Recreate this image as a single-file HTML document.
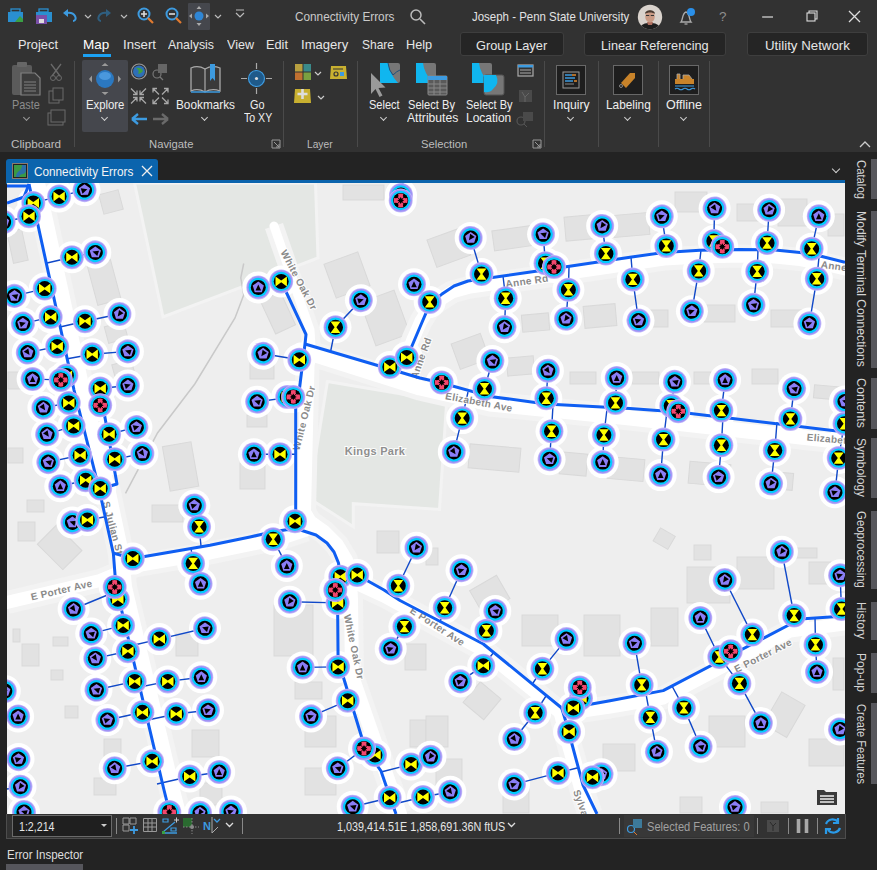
<!DOCTYPE html>
<html><head><meta charset="utf-8">
<style>
*{box-sizing:border-box}
html,body{margin:0;padding:0}
body{width:877px;height:870px;overflow:hidden;position:relative;background:#232323;font-family:"Liberation Sans",sans-serif;color:#e8e8e8}
.a{position:absolute}
.t{position:absolute;white-space:nowrap;line-height:1}
.menu{font-size:13.5px;color:#e6e6e6;top:39px}
.rl{font-size:12.5px;color:#e6e6e6;text-align:center}
.gl{font-size:12px;color:#b9b9b9;top:138px}
.sep{position:absolute;width:1px;background:#4a4a4a}
.chev{position:absolute;width:5px;height:5px;border-right:1.3px solid #cfcfcf;border-bottom:1.3px solid #cfcfcf;transform:rotate(45deg)}
.btn{position:absolute;top:32px;height:24px;background:#252525;border:1px solid #3e3e3e;border-radius:3px;font-size:13.5px;color:#e6e6e6;text-align:center;line-height:23px}
.rt{position:absolute;left:845px;width:32px}
.rt .bar{position:absolute;left:26px;width:6px;top:0;bottom:0;background:#57575c}
.rt .tx{position:absolute;left:9px;top:0;transform-origin:0 0;transform:translate(17px,0) rotate(90deg);font-size:13px;color:#d2d2d2;white-space:nowrap;line-height:16px}
</style></head>
<body>
<!-- top area -->
<div class="a" style="left:0;top:0;width:877px;height:152px;background:#323232"></div>

<!-- quick access icons -->
<svg class="a" style="left:0;top:0" width="260" height="34">
 <g>
  <rect x="8" y="12" width="15" height="10" fill="#2a8fd0"/><rect x="11" y="9" width="9" height="3" fill="none" stroke="#2a8fd0" stroke-width="1.3"/>
  <path d="M15,22 L20,16 L23,19 L23,22Z" fill="#3aa045"/>
  <rect x="36" y="12" width="16" height="10" fill="#2a8fd0"/><rect x="39" y="9" width="9" height="3" fill="none" stroke="#2a8fd0" stroke-width="1.3"/>
  <rect x="36" y="15" width="11" height="9" fill="#7a4fa8"/><rect x="39" y="19" width="5" height="4" fill="#ddd"/>
  <path d="M73,21 C78,21 76,11 66,13" fill="none" stroke="#3d9be0" stroke-width="2"/><path d="M63,13 L68,9 L68,17Z" fill="#3d9be0"/>
  <path d="M85,15 l3,3 l3,-3" fill="none" stroke="#bbb" stroke-width="1.2"/>
  <path d="M101,21 C96,21 98,11 108,13" fill="none" stroke="#2f5f80" stroke-width="2"/><path d="M111,13 L106,9 L106,17Z" fill="#2f5f80"/>
  <path d="M121,15 l3,3 l3,-3" fill="none" stroke="#bbb" stroke-width="1.2"/>
  <circle cx="144" cy="14" r="5.5" fill="none" stroke="#3d9be0" stroke-width="2"/><path d="M141,14h6M144,11v6" stroke="#ddd" stroke-width="1.6"/><path d="M148,18 l5,5" stroke="#e07a30" stroke-width="2.2"/>
  <circle cx="172" cy="14" r="5.5" fill="none" stroke="#3d9be0" stroke-width="2"/><path d="M169,14h6" stroke="#ddd" stroke-width="1.6"/><path d="M176,18 l5,5" stroke="#e07a30" stroke-width="2.2"/>
  <rect x="188" y="3" width="22" height="27" fill="#45474d" rx="1"/>
  <circle cx="199" cy="16" r="4.5" fill="#2f86d6"/><path d="M199,6l-2.5,3h5zM199,26l-2.5,-3h5zM189,16l3,-2.5v5zM209,16l-3,-2.5v5z" fill="#aaa"/>
  <path d="M215,15 l3,3 l3,-3" fill="none" stroke="#bbb" stroke-width="1.2"/>
  <path d="M236,13 l4,4 l4,-4 M236,10h8" fill="none" stroke="#bbb" stroke-width="1.2"/>
 </g>
</svg>
<svg class="a" style="left:408px;top:7px" width="20" height="20"><circle cx="8" cy="8" r="5" fill="none" stroke="#bbb" stroke-width="1.5"/><path d="M12,12l5,5" stroke="#bbb" stroke-width="1.6"/></svg>
<svg class="a" style="left:636px;top:3px" width="28" height="28"><defs><clipPath id="av"><circle cx="14" cy="14" r="12.2"/></clipPath></defs><g clip-path="url(#av)"><rect width="28" height="28" fill="#d9d2cc"/><path d="M3,28 C4,21 9,20 14,20 C19,20 24,21 25,28Z" fill="#1e1e1e"/><path d="M11,19h6l-1,3h-4z" fill="#b07060"/><ellipse cx="14" cy="13.5" rx="4.8" ry="6" fill="#c99a84"/><path d="M9,11 C9,6 19,6 19,11 C17,9 11,9 9,11Z" fill="#4a3a30"/><path d="M10,12.5h3.2M14.8,12.5h3.2" stroke="#333" stroke-width="1.1"/></g></svg>
<svg class="a" style="left:674px;top:4px" width="26" height="26"><path d="M7,18 C9,16 8,9 12,8 C16,9 15,16 17,18Z" fill="none" stroke="#aaa" stroke-width="1.3"/><path d="M10.5,20h3" stroke="#aaa" stroke-width="1.3"/><circle cx="17" cy="8" r="4" fill="#2a8fe8"/></svg>
<svg class="a" style="left:755px;top:6px" width="122" height="22"><path d="M7,11h11" stroke="#ddd" stroke-width="1.2"/><rect x="52" y="7" width="8" height="8" fill="none" stroke="#ddd" stroke-width="1.1"/><path d="M54,7v-2h8v8h-2" fill="none" stroke="#ddd" stroke-width="1.1"/><path d="M94,5l11,11M105,5l-11,11" stroke="#ddd" stroke-width="1.3"/></svg>

<!-- menu -->
<div class="a" style="left:83px;top:54px;width:28px;height:3px;background:#1ba1f2"></div>
<div class="btn" style="left:460px;width:104px"></div>
<div class="btn" style="left:584px;width:142px"></div>
<div class="btn" style="left:747px;width:121px"></div>

<!-- ribbon -->
<svg class="a" style="left:0;top:55px" width="877" height="97">
 <!-- clipboard -->
 <rect x="12" y="10" width="20" height="30" rx="2" fill="#5b5b5b"/><rect x="17" y="7" width="10" height="5" rx="1" fill="#666"/>
 <path d="M21,18h14l5,5v17h-19z" fill="#3c3c3c" stroke="#808080" stroke-width="1.2"/><path d="M24,27h12M24,30h12M24,33h12M24,36h12" stroke="#808080" stroke-width="1"/>
 <path d="M51,9 l9,12 M61,9 l-9,12" stroke="#6a6a6a" stroke-width="1.3"/><circle cx="53" cy="23" r="2.5" fill="none" stroke="#6a6a6a"/><circle cx="59" cy="23" r="2.5" fill="none" stroke="#6a6a6a"/>
 <rect x="49" y="36" width="10" height="12" fill="none" stroke="#6a6a6a"/><rect x="53" y="33" width="10" height="12" fill="#323232" stroke="#6a6a6a"/>
 <rect x="48" y="58" width="15" height="12" fill="none" stroke="#6a6a6a"/><rect x="51" y="55" width="14" height="12" fill="#323232" stroke="#6a6a6a"/>
 <!-- explore -->
 <rect x="82" y="5" width="46" height="72" rx="2" fill="#45474d"/>
 <ellipse cx="105" cy="24" rx="9" ry="9" fill="#2b78c0"/><ellipse cx="105" cy="21" rx="6" ry="4" fill="#4a98dd"/>
 <path d="M105,8l-3.5,3h7zM105,40l-3.5,-3h7zM89,24l3,-3.5v7zM121,24l-3,-3.5v7z" fill="#9a9a9a"/>
 <circle cx="139" cy="16.5" r="7.5" fill="none" stroke="#999" stroke-width="1.2"/><circle cx="139" cy="16.5" r="6" fill="#2f6fb8"/><path d="M136,13 q4,2 2,6 q3,0 5,-3 q-2,-4 -7,-3z" fill="#3fa040"/>
 <circle cx="157" cy="19" r="4" fill="none" stroke="#777" stroke-width="1.2"/><path d="M160,22l3,3" stroke="#777" stroke-width="1.2"/><rect x="158" y="9" width="9" height="9" fill="#666"/>
 <path d="M131,33.5L137,39.5M133,39.5H137V35.5 M146,33.5L140,39.5M144,39.5H140V35.5 M131,48.5L137,42.5M133,42.5H137V46.5 M146,48.5L140,42.5M144,42.5H140V46.5" fill="none" stroke="#a8a8a8" stroke-width="1.3"/>
 <path d="M159,39.5L153,33.5M157,33.5H153V37.5 M162,39.5L168,33.5M164,33.5H168V37.5 M159,42.5L153,48.5M157,48.5H153V44.5 M162,42.5L168,48.5M164,48.5H168V44.5" fill="none" stroke="#a8a8a8" stroke-width="1.3"/>
 <path d="M132,64h15M132,64l6,-5M132,64l6,5" fill="none" stroke="#3d9be0" stroke-width="2.3"/>
 <path d="M168,64h-15M168,64l-6,-5M168,64l-6,5" fill="none" stroke="#6a6a6a" stroke-width="2.3"/>
 <!-- bookmarks -->
 <path d="M191,13 Q198,10 205,14 Q212,10 220,13 V36 Q212,33 205,37 Q198,33 191,36Z" fill="#3a3a3a" stroke="#aaa" stroke-width="1.3"/><path d="M205,14V37" stroke="#aaa" stroke-width="1.2"/>
 <path d="M191,37h29" stroke="#3d9be0" stroke-width="1.5"/><path d="M210,9h5v17l-2.5,-3l-2.5,3z" fill="#3d9be0"/>
 <!-- go to xy -->
 <circle cx="256.5" cy="23.5" r="8" fill="#1f5a8a" stroke="#3d9be0" stroke-width="1.2"/><circle cx="256.5" cy="23.5" r="1.6" fill="#ddd"/>
 <path d="M241,23.5h6M266,23.5h6M256.5,8v6M256.5,33v6" stroke="#aaa" stroke-width="1.2"/>
 <!-- layer -->
 <rect x="295" y="9" width="7.5" height="7.5" fill="#b8a040"/><rect x="303.5" y="9" width="7.5" height="7.5" fill="#3a8a8a"/><rect x="295" y="17.5" width="7.5" height="7.5" fill="#c07030"/><rect x="303.5" y="17.5" width="7.5" height="7.5" fill="#7aa040"/>
 <path d="M315,17 l3,3 l3,-3" fill="none" stroke="#ccc" stroke-width="1.2"/>
 <path d="M331,11 h15 l1,13 h-17z" fill="#c8b030"/><circle cx="336" cy="19" r="2" fill="none" stroke="#333" stroke-width="1.2"/><rect x="340" y="17" width="4" height="4" fill="#3d9be0"/><path d="M333,14h10" stroke="#333"/>
 <path d="M295,34 h15 l1,14 h-17z" fill="#c8b030"/><path d="M302.5,34v10M297.5,39h10" stroke="#ddd" stroke-width="2.6"/>
 <path d="M318,41 l3,3 l3,-3" fill="none" stroke="#ccc" stroke-width="1.2"/>
 <!-- select -->
 <rect x="380" y="8" width="20" height="20" rx="2" fill="#777"/><path d="M380,8h8q1,10 10,20h-18z" fill="#10b6ef"/><path d="M388,8q1,8 5,12q4,-4 7,-5" fill="none" stroke="#1f4f7a" stroke-width="1"/>
 <path d="M371,18 l0,21 l4.5,-5 l4,8 l3,-1.5 l-4,-7.5 l7,-0.5z" fill="#9a9a9a"/>
 <!-- select by attributes -->
 <rect x="416" y="8" width="20" height="20" rx="2" fill="#777"/><path d="M416,8h7q1,10 10,20h-17z" fill="#10b6ef"/>
 <rect x="428" y="21" width="19" height="19" rx="1" fill="#5a5a5a" stroke="#888" stroke-width="1"/><rect x="428" y="21" width="19" height="4" fill="#3d9be0"/><path d="M428,29h19M428,33h19M428,37h19M434,25v15M440,25v15" stroke="#888" stroke-width="1"/>
 <!-- select by location -->
 <rect x="472" y="8" width="20" height="20" rx="2" fill="#777"/><path d="M472,8h7q1,10 10,20h-17z" fill="#10b6ef"/>
 <rect x="484" y="20" width="20" height="20" rx="2" fill="#777" stroke="#555"/><path d="M484,20h12q4,8 -3,14q-3,4 -9,3z" fill="#10b6ef"/>
 <rect x="518" y="10" width="15" height="11" fill="none" stroke="#aaa" stroke-width="1.2"/><rect x="518" y="10" width="15" height="2.5" fill="#3d9be0"/><path d="M520,15h11M520,18h11" stroke="#aaa"/>
 <rect x="519" y="35" width="13" height="12" fill="#4a4a4a"/><path d="M522,37l3,5l4,-4M525,42v5" stroke="#666" fill="none"/>
 <circle cx="521" cy="66" r="4" fill="none" stroke="#555" stroke-width="1.2"/><path d="M524,69l3,3" stroke="#555"/><rect x="523" y="57" width="10" height="9" fill="#4a4a4a"/>
 <!-- inquiry / labeling / offline boxes -->
 <rect x="556.5" y="10.5" width="29" height="29" fill="#1e1e1e" stroke="#686868"/><rect x="563" y="17" width="16" height="16" fill="none" stroke="#999"/><path d="M565,20h7M565,23h10M565,26h8" stroke="#3d9be0" stroke-width="1.6"/><path d="M572,20h4M574,26h3" stroke="#e08a30" stroke-width="1.6"/><path d="M565,29h9" stroke="#888"/>
 <rect x="613.5" y="10.5" width="29" height="29" fill="#1e1e1e" stroke="#686868"/><path d="M621,28 l9,-10 l5,0 l0,5 l-9,10z" fill="#c8832a"/><circle cx="621" cy="31" r="1.5" fill="none" stroke="#888"/>
 <rect x="669.5" y="10.5" width="29" height="29" fill="#1e1e1e" stroke="#686868"/><path d="M675,24h19v5h-19z" fill="#c8832a"/><path d="M677,24v-5h3v5M683,24v-4h6l3,4" fill="#c8832a" stroke="#aaa" stroke-width=".8"/><path d="M675,31h19M675,34q2,-1.5 4,0t4,0t4,0t4,0t4,0" stroke="#3d9be0" stroke-width="1.2" fill="none"/>
 <!-- launchers -->
 <path d="M272,85h8v8h-8zM274,87l5,5M279,89v3h-3" fill="none" stroke="#999" stroke-width="1"/>
 <path d="M533,85h8v8h-8zM535,87l5,5M540,89v3h-3" fill="none" stroke="#999" stroke-width="1"/>
 <path d="M860,92 l5,-5 l5,5" fill="none" stroke="#ccc" stroke-width="1.3"/>
</svg>
<div class="chev" style="left:24px;top:115px;border-color:#9a9a9a"></div>
<div class="chev" style="left:102px;top:115px"></div>
<div class="chev" style="left:202px;top:115px"></div>
<div class="chev" style="left:381px;top:115px"></div>
<div class="chev" style="left:568px;top:115px"></div>
<div class="chev" style="left:625px;top:115px"></div>
<div class="chev" style="left:681px;top:115px"></div>
<div class="sep" style="left:74px;top:61px;height:86px"></div>
<div class="sep" style="left:283px;top:61px;height:86px"></div>
<div class="sep" style="left:357px;top:61px;height:86px"></div>
<div class="sep" style="left:544px;top:61px;height:86px"></div>
<div class="sep" style="left:598px;top:61px;height:86px"></div>
<div class="sep" style="left:658px;top:61px;height:86px"></div>
<div class="sep" style="left:709px;top:61px;height:86px"></div>

<!-- view tab -->
<div class="a" style="left:6px;top:159px;width:152px;height:25px;background:#0b64ad;border-radius:3px 3px 0 0"></div>
<svg class="a" style="left:12px;top:163px" width="16" height="16"><rect x=".5" y=".5" width="15" height="15" fill="#222" stroke="#8a7a70"/><rect x="2" y="2" width="12" height="12" fill="#3a9a45"/><path d="M14,2 L10,2 q0,4 -3,6 q-3,2 -3,6 h3 q1,-3 4,-3 q3,-1 3,-4z" fill="#2a70a8"/></svg>
<svg class="a" style="left:140px;top:164px" width="14" height="14"><path d="M2,2l10,10M12,2l-10,10" stroke="#eee" stroke-width="1.3"/></svg>
<div class="a" style="left:7px;top:180px;width:838px;height:3px;background:#0b64ad"></div>
<div class="chev" style="left:833px;top:166px;width:6px;height:6px"></div>

<svg width="877" height="870" viewBox="0 0 877 870" style="position:absolute;left:0;top:0">
<defs>
<clipPath id="mc"><rect x="7" y="183" width="838" height="631"/></clipPath>
<g id="ring"><circle r="12" fill="#c2b9fa"/><circle r="11.2" fill="#a092f6"/><circle r="9.7" fill="#00ccff"/><circle r="7.5" fill="#000"/></g>
<g id="T"><use href="#ring"/><path d="M-5,-5.7L5,-5.7L0.9,0L5,5.7L-5,5.7L-0.9,0Z" fill="#ffff00"/></g>
<g id="S"><use href="#ring"/><path d="M0,-5.9L5.6,-1.8L3.5,4.8L-3.5,4.8L-5.6,-1.8Z" fill="#8a7ef6"/><path d="M-2.8,3L2.8,3L0,-3Z" fill="#000"/></g>
<clipPath id="ec"><circle r="7.4"/></clipPath><g id="E"><use href="#ring"/><circle r="6.9" fill="#f2476e"/><g fill="#000" clip-path="url(#ec)"><circle cx="5" cy="-5" r="2.7"/><circle cx="5" cy="5" r="2.7"/><circle cx="-5" cy="5" r="2.7"/><circle cx="-5" cy="-5" r="2.7"/><path d="M-6,-6L6,6M6,-6L-6,6" stroke="#000" stroke-width="0.9"/></g><path d="M0,-3.4L1.2,-1.2L3.4,0L1.2,1.2L0,3.4L-1.2,1.2L-3.4,0L-1.2,-1.2Z" fill="#000"/><circle r="1.9" fill="#000"/></g>
</defs>
<g clip-path="url(#mc)">
<rect x="7" y="183" width="838" height="631" fill="#eeeeee"/>
<polygon points="134.5,183.0 315.5,183.0 318.0,258.0 163.0,317.0" fill="#e4e7e4" stroke="#f3f3f3" stroke-width="3"/>
<polygon points="327.4,381.5 446.7,401.6 439.5,509.4 353.3,503.7 353.3,526.7 308.7,498.0" fill="#e4e7e4" stroke="#f3f3f3" stroke-width="3"/>
<g id="bld" fill="#e2e2e2" stroke="#d9d9d9" stroke-width="1"><rect x="101" y="192" width="20" height="20" transform="rotate(-15 111 202)"/>
<rect x="10" y="230" width="15" height="32" transform="rotate(-12 18 246)"/>
<rect x="92" y="262" width="24" height="41" transform="rotate(-15 104 282)"/>
<rect x="106" y="324" width="20" height="17" transform="rotate(-15 116 332)"/>
<rect x="113" y="362" width="20" height="12" transform="rotate(-15 123 368)"/>
<rect x="166" y="444" width="29" height="45" transform="rotate(-10 180 466)"/>
<rect x="267" y="295" width="22" height="36" transform="rotate(-25 278 313)"/>
<rect x="329" y="257" width="36" height="36" transform="rotate(-20 347 275)"/>
<rect x="367" y="295" width="36" height="46" transform="rotate(-20 385 318)"/>
<rect x="343" y="185" width="41" height="15" transform="rotate(0 364 192)"/>
<rect x="250" y="362" width="24" height="17" transform="rotate(0 262 370)"/>
<rect x="247" y="415" width="20" height="12" transform="rotate(0 257 421)"/>
<rect x="240" y="463" width="25" height="26" transform="rotate(0 252 476)"/>
<rect x="8" y="372" width="17" height="17" transform="rotate(0 16 380)"/>
<rect x="8" y="448" width="15" height="15" transform="rotate(0 16 456)"/>
<rect x="431" y="233" width="36" height="29" transform="rotate(-20 449 248)"/>
<rect x="493" y="228" width="41" height="20" transform="rotate(-8 514 238)"/>
<rect x="565" y="216" width="27" height="24" transform="rotate(-5 578 228)"/>
<rect x="613" y="214" width="36" height="22" transform="rotate(-5 631 225)"/>
<rect x="675" y="192" width="32" height="20" transform="rotate(0 691 202)"/>
<rect x="737" y="204" width="22" height="17" transform="rotate(0 748 212)"/>
<rect x="778" y="199" width="29" height="27" transform="rotate(0 792 212)"/>
<rect x="828" y="214" width="16" height="22" transform="rotate(0 836 225)"/>
<rect x="522" y="314" width="27" height="17" transform="rotate(-5 536 322)"/>
<rect x="584" y="305" width="32" height="22" transform="rotate(-5 600 316)"/>
<rect x="646" y="310" width="22" height="17" transform="rotate(0 657 318)"/>
<rect x="704" y="305" width="31" height="17" transform="rotate(0 720 314)"/>
<rect x="771" y="310" width="31" height="17" transform="rotate(0 786 318)"/>
<rect x="455" y="338" width="31" height="27" transform="rotate(-20 470 352)"/>
<rect x="507" y="357" width="27" height="18" transform="rotate(-5 520 366)"/>
<rect x="570" y="372" width="26" height="12" transform="rotate(0 583 378)"/>
<rect x="632" y="372" width="27" height="12" transform="rotate(0 646 378)"/>
<rect x="694" y="372" width="17" height="12" transform="rotate(0 702 378)"/>
<rect x="752" y="369" width="26" height="15" transform="rotate(0 765 376)"/>
<rect x="814" y="386" width="27" height="13" transform="rotate(5 828 392)"/>
<rect x="469" y="446" width="51" height="24" transform="rotate(5 494 458)"/>
<rect x="560" y="453" width="27" height="22" transform="rotate(5 574 464)"/>
<rect x="608" y="458" width="36" height="22" transform="rotate(5 626 469)"/>
<rect x="689" y="463" width="41" height="22" transform="rotate(5 710 474)"/>
<rect x="761" y="472" width="32" height="17" transform="rotate(5 777 480)"/>
<rect x="27" y="500" width="17" height="12" transform="rotate(0 36 506)"/>
<rect x="18" y="522" width="17" height="19" transform="rotate(0 26 532)"/>
<rect x="46" y="529" width="27" height="36" transform="rotate(-45 60 547)"/>
<rect x="152" y="505" width="31" height="17" transform="rotate(0 168 514)"/>
<rect x="13" y="629" width="7" height="13" transform="rotate(0 16 636)"/>
<rect x="22" y="644" width="17" height="22" transform="rotate(0 30 655)"/>
<rect x="53" y="637" width="15" height="9" transform="rotate(0 60 642)"/>
<rect x="51" y="670" width="12" height="10" transform="rotate(0 57 675)"/>
<rect x="65" y="706" width="13" height="12" transform="rotate(0 72 712)"/>
<rect x="104" y="739" width="17" height="20" transform="rotate(0 112 749)"/>
<rect x="94" y="778" width="22" height="17" transform="rotate(0 105 786)"/>
<rect x="176" y="634" width="22" height="22" transform="rotate(0 187 645)"/>
<rect x="192" y="730" width="27" height="27" transform="rotate(0 206 744)"/>
<rect x="200" y="783" width="22" height="22" transform="rotate(0 211 794)"/>
<rect x="274" y="605" width="39" height="51" transform="rotate(0 294 630)"/>
<rect x="295" y="682" width="27" height="17" transform="rotate(0 308 690)"/>
<rect x="305" y="716" width="31" height="31" transform="rotate(0 320 732)"/>
<rect x="305" y="768" width="31" height="27" transform="rotate(0 320 782)"/>
<rect x="377" y="531" width="22" height="22" transform="rotate(0 388 542)"/>
<rect x="405" y="644" width="21" height="26" transform="rotate(0 416 657)"/>
<rect x="410" y="720" width="16" height="27" transform="rotate(0 418 734)"/>
<rect x="656" y="531" width="17" height="15" transform="rotate(30 664 538)"/>
<rect x="694" y="545" width="17" height="15" transform="rotate(0 702 552)"/>
<rect x="474" y="581" width="31" height="27" transform="rotate(-30 490 594)"/>
<rect x="426" y="548" width="12" height="17" transform="rotate(0 432 556)"/>
<rect x="522" y="615" width="36" height="31" transform="rotate(0 540 630)"/>
<rect x="584" y="615" width="36" height="41" transform="rotate(0 602 636)"/>
<rect x="651" y="608" width="27" height="38" transform="rotate(0 664 627)"/>
<rect x="687" y="567" width="43" height="36" transform="rotate(0 708 585)"/>
<rect x="737" y="557" width="37" height="32" transform="rotate(0 756 573)"/>
<rect x="795" y="548" width="22" height="10" transform="rotate(0 806 553)"/>
<rect x="809" y="562" width="22" height="22" transform="rotate(0 820 573)"/>
<rect x="833" y="658" width="11" height="32" transform="rotate(0 838 674)"/>
<rect x="771" y="696" width="27" height="37" transform="rotate(30 784 714)"/>
<rect x="709" y="716" width="36" height="31" transform="rotate(0 727 732)"/>
<rect x="603" y="744" width="32" height="27" transform="rotate(0 619 758)"/>
<rect x="469" y="687" width="27" height="27" transform="rotate(40 482 700)"/>
<rect x="426" y="716" width="22" height="31" transform="rotate(0 437 732)"/>
<rect x="436" y="759" width="26" height="26" transform="rotate(0 449 772)"/>
<rect x="503" y="787" width="26" height="26" transform="rotate(0 516 800)"/>
<rect x="680" y="797" width="22" height="16" transform="rotate(0 691 805)"/>
<rect x="761" y="802" width="27" height="11" transform="rotate(0 774 808)"/>
<rect x="809" y="739" width="35" height="27" transform="rotate(0 826 752)"/></g>
<polyline points="125.5,493.4 157.5,433.0 194.8,384.0 235.0,318.0 243.7,295.0 240.8,277.8 243.7,263.5" fill="none" stroke="#c9c9c9" stroke-width="1.5"/>
<polyline points="37.0,183.0 82.0,390.0 107.0,488.0 121.0,554.0 124.0,587.0 172.0,790.0 178.0,814.0" fill="none" stroke="#f3f3f3" stroke-width="26" stroke-linejoin="round"/>
<polyline points="274.0,226.0 310.0,330.0 311.0,346.0" fill="none" stroke="#f3f3f3" stroke-width="19" stroke-linejoin="round"/>
<polyline points="300.0,350.0 420.0,388.0 490.0,404.0 630.0,418.0 845.0,442.0" fill="none" stroke="#f3f3f3" stroke-width="25" stroke-linejoin="round"/>
<polyline points="400.0,372.0 414.0,337.0 421.0,321.0 428.0,310.0 438.0,301.0 452.0,292.0 470.0,287.0 541.0,277.0 630.0,264.0 664.0,259.0 700.0,257.0 740.0,256.0 775.0,257.0 800.0,259.5 822.0,263.5 845.0,269.0" fill="none" stroke="#f3f3f3" stroke-width="23" stroke-linejoin="round"/>
<polyline points="308.0,345.0 304.0,512.0 310.0,522.0 324.0,532.0 337.0,545.0 346.0,560.0 350.0,578.0 351.0,600.0 352.0,676.0 400.0,814.0" fill="none" stroke="#f3f3f3" stroke-width="24" stroke-linejoin="round"/>
<polyline points="7.0,602.5 100.0,580.5 135.0,566.0 210.0,553.0 282.0,538.0 306.0,530.0" fill="none" stroke="#f3f3f3" stroke-width="23" stroke-linejoin="round"/>
<polyline points="345.0,578.0 384.0,596.0 483.0,650.0 562.0,714.0 610.0,707.0 663.0,698.0 790.0,631.0 845.0,624.0" fill="none" stroke="#f3f3f3" stroke-width="23" stroke-linejoin="round"/>
<polyline points="561.0,712.0 568.0,740.0 582.0,790.0 590.0,814.0" fill="none" stroke="#f3f3f3" stroke-width="25" stroke-linejoin="round"/>
<polyline points="37.0,183.0 82.0,390.0 107.0,488.0 121.0,554.0 124.0,587.0 172.0,790.0 178.0,814.0" fill="none" stroke="#ffffff" stroke-width="16" stroke-linejoin="round" stroke-linecap="round"/>
<polyline points="274.0,226.0 310.0,330.0 311.0,346.0" fill="none" stroke="#ffffff" stroke-width="9" stroke-linejoin="round" stroke-linecap="round"/>
<polyline points="300.0,350.0 420.0,388.0 490.0,404.0 630.0,418.0 845.0,442.0" fill="none" stroke="#ffffff" stroke-width="15" stroke-linejoin="round" stroke-linecap="round"/>
<polyline points="400.0,372.0 414.0,337.0 421.0,321.0 428.0,310.0 438.0,301.0 452.0,292.0 470.0,287.0 541.0,277.0 630.0,264.0 664.0,259.0 700.0,257.0 740.0,256.0 775.0,257.0 800.0,259.5 822.0,263.5 845.0,269.0" fill="none" stroke="#ffffff" stroke-width="13" stroke-linejoin="round" stroke-linecap="round"/>
<polyline points="308.0,345.0 304.0,512.0 310.0,522.0 324.0,532.0 337.0,545.0 346.0,560.0 350.0,578.0 351.0,600.0 352.0,676.0 400.0,814.0" fill="none" stroke="#ffffff" stroke-width="14" stroke-linejoin="round" stroke-linecap="round"/>
<polyline points="7.0,602.5 100.0,580.5 135.0,566.0 210.0,553.0 282.0,538.0 306.0,530.0" fill="none" stroke="#ffffff" stroke-width="13" stroke-linejoin="round" stroke-linecap="round"/>
<polyline points="345.0,578.0 384.0,596.0 483.0,650.0 562.0,714.0 610.0,707.0 663.0,698.0 790.0,631.0 845.0,624.0" fill="none" stroke="#ffffff" stroke-width="13" stroke-linejoin="round" stroke-linecap="round"/>
<polyline points="561.0,712.0 568.0,740.0 582.0,790.0 590.0,814.0" fill="none" stroke="#ffffff" stroke-width="15" stroke-linejoin="round" stroke-linecap="round"/>
<g fill="#fff">
<circle cx="59.1" cy="196.4" r="16"/>
<circle cx="84.5" cy="190.1" r="16"/>
<circle cx="33.3" cy="202.9" r="16"/>
<circle cx="29.0" cy="216.2" r="16"/>
<circle cx="3.6" cy="222.0" r="16"/>
<circle cx="71.9" cy="257.2" r="16"/>
<circle cx="95.3" cy="252.4" r="16"/>
<circle cx="44.7" cy="288.6" r="16"/>
<circle cx="14.5" cy="295.9" r="16"/>
<circle cx="50.7" cy="317.1" r="16"/>
<circle cx="22.9" cy="323.6" r="16"/>
<circle cx="85.0" cy="321.2" r="16"/>
<circle cx="119.5" cy="314.0" r="16"/>
<circle cx="57.2" cy="346.5" r="16"/>
<circle cx="27.8" cy="352.6" r="16"/>
<circle cx="92.2" cy="354.3" r="16"/>
<circle cx="127.9" cy="351.4" r="16"/>
<circle cx="66.4" cy="375.5" r="16"/>
<circle cx="60.8" cy="379.9" r="16"/>
<circle cx="32.6" cy="379.1" r="16"/>
<circle cx="100.2" cy="388.5" r="16"/>
<circle cx="127.9" cy="385.5" r="16"/>
<circle cx="401.0" cy="195.0" r="16"/>
<circle cx="400.7" cy="200.5" r="16"/>
<circle cx="258.3" cy="287.4" r="16"/>
<circle cx="281.2" cy="281.4" r="16"/>
<circle cx="360.9" cy="300.2" r="16"/>
<circle cx="335.5" cy="327.2" r="16"/>
<circle cx="263.1" cy="353.8" r="16"/>
<circle cx="299.3" cy="359.8" r="16"/>
<circle cx="389.8" cy="367.1" r="16"/>
<circle cx="406.7" cy="357.4" r="16"/>
<circle cx="414.0" cy="284.3" r="16"/>
<circle cx="470.7" cy="237.9" r="16"/>
<circle cx="481.5" cy="274.1" r="16"/>
<circle cx="429.7" cy="301.9" r="16"/>
<circle cx="543.1" cy="234.3" r="16"/>
<circle cx="545.5" cy="263.3" r="16"/>
<circle cx="554.0" cy="266.9" r="16"/>
<circle cx="505.7" cy="298.3" r="16"/>
<circle cx="504.5" cy="327.2" r="16"/>
<circle cx="568.4" cy="289.8" r="16"/>
<circle cx="566.0" cy="318.8" r="16"/>
<circle cx="602.2" cy="225.9" r="16"/>
<circle cx="605.9" cy="253.6" r="16"/>
<circle cx="632.8" cy="279.4" r="16"/>
<circle cx="638.5" cy="320.5" r="16"/>
<circle cx="441.7" cy="382.5" r="16"/>
<circle cx="492.4" cy="361.0" r="16"/>
<circle cx="484.5" cy="388.8" r="16"/>
<circle cx="547.9" cy="370.7" r="16"/>
<circle cx="616.7" cy="377.9" r="16"/>
<circle cx="661.8" cy="216.3" r="16"/>
<circle cx="666.3" cy="245.9" r="16"/>
<circle cx="714.6" cy="208.4" r="16"/>
<circle cx="713.8" cy="241.0" r="16"/>
<circle cx="722.3" cy="246.7" r="16"/>
<circle cx="769.1" cy="209.8" r="16"/>
<circle cx="767.1" cy="243.0" r="16"/>
<circle cx="818.8" cy="216.3" r="16"/>
<circle cx="811.7" cy="248.7" r="16"/>
<circle cx="698.7" cy="270.9" r="16"/>
<circle cx="691.9" cy="311.2" r="16"/>
<circle cx="757.2" cy="271.4" r="16"/>
<circle cx="753.5" cy="304.9" r="16"/>
<circle cx="816.8" cy="278.8" r="16"/>
<circle cx="809.4" cy="323.4" r="16"/>
<circle cx="674.9" cy="381.8" r="16"/>
<circle cx="671.2" cy="405.7" r="16"/>
<circle cx="678.3" cy="411.3" r="16"/>
<circle cx="725.1" cy="380.0" r="16"/>
<circle cx="721.4" cy="410.6" r="16"/>
<circle cx="794.1" cy="388.6" r="16"/>
<circle cx="790.4" cy="418.9" r="16"/>
<circle cx="845.0" cy="401.4" r="16"/>
<circle cx="844.5" cy="423.7" r="16"/>
<circle cx="68.8" cy="402.9" r="16"/>
<circle cx="43.4" cy="407.8" r="16"/>
<circle cx="100.2" cy="405.3" r="16"/>
<circle cx="73.6" cy="425.9" r="16"/>
<circle cx="47.1" cy="434.3" r="16"/>
<circle cx="109.1" cy="434.3" r="16"/>
<circle cx="136.4" cy="427.1" r="16"/>
<circle cx="80.1" cy="455.3" r="16"/>
<circle cx="48.3" cy="462.1" r="16"/>
<circle cx="114.7" cy="459.2" r="16"/>
<circle cx="142.4" cy="453.6" r="16"/>
<circle cx="85.7" cy="480.2" r="16"/>
<circle cx="60.3" cy="486.2" r="16"/>
<circle cx="100.2" cy="488.6" r="16"/>
<circle cx="72.4" cy="522.4" r="16"/>
<circle cx="87.4" cy="520.0" r="16"/>
<circle cx="132.8" cy="558.6" r="16"/>
<circle cx="117.8" cy="599.3" r="16"/>
<circle cx="114.7" cy="587.0" r="16"/>
<circle cx="194.3" cy="505.5" r="16"/>
<circle cx="199.1" cy="526.8" r="16"/>
<circle cx="193.1" cy="563.4" r="16"/>
<circle cx="200.6" cy="583.8" r="16"/>
<circle cx="257.1" cy="401.7" r="16"/>
<circle cx="287.2" cy="396.9" r="16"/>
<circle cx="293.3" cy="396.9" r="16"/>
<circle cx="253.9" cy="454.3" r="16"/>
<circle cx="280.0" cy="454.3" r="16"/>
<circle cx="295.0" cy="521.2" r="16"/>
<circle cx="273.2" cy="539.3" r="16"/>
<circle cx="286.8" cy="565.9" r="16"/>
<circle cx="340.3" cy="576.7" r="16"/>
<circle cx="337.6" cy="602.9" r="16"/>
<circle cx="335.3" cy="590.0" r="16"/>
<circle cx="357.2" cy="575.0" r="16"/>
<circle cx="416.4" cy="547.8" r="16"/>
<circle cx="398.3" cy="585.8" r="16"/>
<circle cx="462.2" cy="418.1" r="16"/>
<circle cx="453.8" cy="451.9" r="16"/>
<circle cx="546.3" cy="398.2" r="16"/>
<circle cx="551.5" cy="431.2" r="16"/>
<circle cx="549.6" cy="459.2" r="16"/>
<circle cx="615.5" cy="402.9" r="16"/>
<circle cx="603.9" cy="435.0" r="16"/>
<circle cx="602.7" cy="462.1" r="16"/>
<circle cx="461.5" cy="570.2" r="16"/>
<circle cx="663.5" cy="439.6" r="16"/>
<circle cx="660.7" cy="475.1" r="16"/>
<circle cx="721.4" cy="445.3" r="16"/>
<circle cx="718.6" cy="477.1" r="16"/>
<circle cx="774.8" cy="450.4" r="16"/>
<circle cx="771.1" cy="483.6" r="16"/>
<circle cx="838.7" cy="458.1" r="16"/>
<circle cx="835.0" cy="492.2" r="16"/>
<circle cx="781.9" cy="551.8" r="16"/>
<circle cx="794.1" cy="615.5" r="16"/>
<circle cx="724.8" cy="580.0" r="16"/>
<circle cx="700.3" cy="617.9" r="16"/>
<circle cx="840.1" cy="575.3" r="16"/>
<circle cx="841.5" cy="609.0" r="16"/>
<circle cx="73.6" cy="609.0" r="16"/>
<circle cx="123.1" cy="625.4" r="16"/>
<circle cx="91.2" cy="633.6" r="16"/>
<circle cx="127.9" cy="651.2" r="16"/>
<circle cx="95.3" cy="658.4" r="16"/>
<circle cx="159.3" cy="639.1" r="16"/>
<circle cx="205.0" cy="628.3" r="16"/>
<circle cx="134.7" cy="681.4" r="16"/>
<circle cx="96.5" cy="689.8" r="16"/>
<circle cx="167.8" cy="681.4" r="16"/>
<circle cx="201.3" cy="677.2" r="16"/>
<circle cx="142.4" cy="712.3" r="16"/>
<circle cx="107.4" cy="720.0" r="16"/>
<circle cx="176.2" cy="714.0" r="16"/>
<circle cx="208.0" cy="710.3" r="16"/>
<circle cx="18.1" cy="716.4" r="16"/>
<circle cx="152.1" cy="761.3" r="16"/>
<circle cx="114.7" cy="768.3" r="16"/>
<circle cx="189.7" cy="776.5" r="16"/>
<circle cx="219.2" cy="772.0" r="16"/>
<circle cx="18.5" cy="759.1" r="16"/>
<circle cx="20.5" cy="786.7" r="16"/>
<circle cx="4.8" cy="691.0" r="16"/>
<circle cx="289.8" cy="601.7" r="16"/>
<circle cx="338.1" cy="666.9" r="16"/>
<circle cx="302.6" cy="667.4" r="16"/>
<circle cx="347.7" cy="700.7" r="16"/>
<circle cx="311.0" cy="716.4" r="16"/>
<circle cx="375.0" cy="755.0" r="16"/>
<circle cx="364.0" cy="748.5" r="16"/>
<circle cx="337.8" cy="768.3" r="16"/>
<circle cx="411.0" cy="764.4" r="16"/>
<circle cx="430.5" cy="756.8" r="16"/>
<circle cx="404.4" cy="626.6" r="16"/>
<circle cx="390.7" cy="648.8" r="16"/>
<circle cx="389.7" cy="797.8" r="16"/>
<circle cx="352.7" cy="806.7" r="16"/>
<circle cx="423.0" cy="797.0" r="16"/>
<circle cx="450.3" cy="791.8" r="16"/>
<circle cx="444.7" cy="607.8" r="16"/>
<circle cx="495.3" cy="610.9" r="16"/>
<circle cx="486.4" cy="630.7" r="16"/>
<circle cx="483.3" cy="665.7" r="16"/>
<circle cx="460.3" cy="681.4" r="16"/>
<circle cx="566.5" cy="639.1" r="16"/>
<circle cx="542.4" cy="668.8" r="16"/>
<circle cx="535.2" cy="712.8" r="16"/>
<circle cx="514.3" cy="739.0" r="16"/>
<circle cx="581.0" cy="698.3" r="16"/>
<circle cx="579.8" cy="687.4" r="16"/>
<circle cx="573.3" cy="707.9" r="16"/>
<circle cx="569.1" cy="731.7" r="16"/>
<circle cx="601.6" cy="774.2" r="16"/>
<circle cx="592.5" cy="777.2" r="16"/>
<circle cx="558.0" cy="772.9" r="16"/>
<circle cx="514.0" cy="784.4" r="16"/>
<circle cx="634.5" cy="643.2" r="16"/>
<circle cx="641.7" cy="684.9" r="16"/>
<circle cx="650.3" cy="717.4" r="16"/>
<circle cx="656.9" cy="751.8" r="16"/>
<circle cx="683.9" cy="707.9" r="16"/>
<circle cx="700.6" cy="746.7" r="16"/>
<circle cx="719.3" cy="657.0" r="16"/>
<circle cx="730.7" cy="651.3" r="16"/>
<circle cx="739.4" cy="683.4" r="16"/>
<circle cx="760.9" cy="723.1" r="16"/>
<circle cx="752.3" cy="634.6" r="16"/>
<circle cx="815.5" cy="644.7" r="16"/>
<circle cx="817.0" cy="672.0" r="16"/>
<circle cx="840.0" cy="729.4" r="16"/>
<circle cx="735.0" cy="807.0" r="16"/>
<circle cx="24.0" cy="812.0" r="16"/>
<circle cx="169.3" cy="812.0" r="16"/>
<circle cx="200.0" cy="812.8" r="16"/>
<circle cx="231.0" cy="811.5" r="16"/>
</g>
<g fill="none" stroke="#1048c8" stroke-width="1.4">
<polyline points="59.1,196.4 84.5,190.1"/>
<polyline points="59.1,196.4 33.3,202.9"/>
<polyline points="29.0,216.2 3.6,222.0"/>
<polyline points="95.3,252.4 71.9,257.2 47.0,263.0"/>
<polyline points="44.7,288.6 14.5,295.9"/>
<polyline points="50.7,317.1 22.9,323.6"/>
<polyline points="119.5,314.0 85.0,321.2 60.0,327.0"/>
<polyline points="57.2,346.5 27.8,352.6"/>
<polyline points="127.9,351.4 92.2,354.3 66.0,359.0"/>
<polyline points="60.8,379.9 32.6,379.1"/>
<polyline points="127.9,385.5 100.2,388.5"/>
<polyline points="68.8,402.9 43.4,407.8"/>
<polyline points="73.6,425.9 47.1,434.3"/>
<polyline points="109.1,434.3 136.4,427.1"/>
<polyline points="80.1,455.3 48.3,462.1"/>
<polyline points="114.7,459.2 142.4,453.6"/>
<polyline points="85.7,480.2 60.3,486.2"/>
<polyline points="72.4,522.4 87.4,520.0 104.0,517.0"/>
<polyline points="194.3,505.5 199.1,526.8 201.0,546.0"/>
<polyline points="200.6,583.8 193.1,563.4 191.0,548.0"/>
<polyline points="258.3,287.4 281.2,281.4"/>
<polyline points="360.9,300.2 335.5,327.2 330.7,351.0"/>
<polyline points="263.1,353.8 299.3,359.8"/>
<polyline points="414.0,284.3 429.7,301.9"/>
<polyline points="257.1,401.7 293.3,396.9"/>
<polyline points="253.9,454.3 280.0,454.3 295.7,454.3"/>
<polyline points="273.2,539.3 286.8,565.9"/>
<polyline points="470.7,237.9 481.5,274.1"/>
<polyline points="543.1,234.3 545.5,263.3"/>
<polyline points="504.5,327.2 505.7,298.3 503.0,276.0"/>
<polyline points="566.0,318.8 568.4,289.8 569.0,267.0"/>
<polyline points="602.2,225.9 605.9,253.6"/>
<polyline points="638.5,320.5 632.8,279.4 631.0,257.0"/>
<polyline points="492.4,361.0 484.5,388.8"/>
<polyline points="547.9,370.7 546.3,398.2"/>
<polyline points="616.7,377.9 615.5,402.9"/>
<polyline points="661.8,216.3 666.3,245.9"/>
<polyline points="714.6,208.4 713.8,241.0"/>
<polyline points="769.1,209.8 767.1,243.0"/>
<polyline points="818.8,216.3 811.7,248.7"/>
<polyline points="691.9,311.2 698.7,270.9 701.0,250.0"/>
<polyline points="753.5,304.9 757.2,271.4 758.0,250.0"/>
<polyline points="809.4,323.4 816.8,278.8 819.0,257.0"/>
<polyline points="674.9,381.8 671.2,405.7"/>
<polyline points="725.1,380.0 721.4,410.6"/>
<polyline points="794.1,388.6 790.4,418.9"/>
<polyline points="845.0,401.4 844.5,423.7"/>
<polyline points="453.8,451.9 462.2,418.1 468.0,392.0"/>
<polyline points="549.6,459.2 551.5,431.2 553.0,405.0"/>
<polyline points="602.7,462.1 603.9,435.0 607.0,409.0"/>
<polyline points="660.7,475.1 663.5,439.6 667.0,411.0"/>
<polyline points="718.6,477.1 721.4,445.3 723.0,416.0"/>
<polyline points="771.1,483.6 774.8,450.4 777.0,422.0"/>
<polyline points="835.0,492.2 838.7,458.1 843.0,431.0"/>
<polyline points="781.9,551.8 794.1,615.5"/>
<polyline points="724.8,580.0 752.3,634.6"/>
<polyline points="840.1,575.3 841.5,609.0"/>
<polyline points="73.6,609.0 114.7,592.0"/>
<polyline points="91.2,633.6 123.1,625.4"/>
<polyline points="95.3,658.4 127.9,651.2"/>
<polyline points="205.0,628.3 159.3,639.1 130.0,646.0"/>
<polyline points="96.5,689.8 134.7,681.4"/>
<polyline points="201.3,677.2 167.8,681.4 135.0,688.0"/>
<polyline points="107.4,720.0 142.4,712.3"/>
<polyline points="208.0,710.3 176.2,714.0 143.0,721.0"/>
<polyline points="114.7,768.3 152.1,761.3"/>
<polyline points="219.2,772.0 189.7,776.5 157.0,784.0"/>
<polyline points="18.1,716.4 7.0,718.0"/>
<polyline points="18.5,759.1 7.0,760.0"/>
<polyline points="20.5,786.7 7.0,789.0"/>
<polyline points="289.8,601.7 337.6,602.9"/>
<polyline points="302.6,667.4 338.1,666.9"/>
<polyline points="311.0,716.4 347.7,700.7"/>
<polyline points="337.8,768.3 364.0,748.5"/>
<polyline points="390.7,648.8 404.4,626.6"/>
<polyline points="430.5,756.8 411.0,764.4 381.0,772.0"/>
<polyline points="450.3,791.8 423.0,797.0 390.0,805.0"/>
<polyline points="352.7,806.7 389.7,797.8"/>
<polyline points="461.5,570.2 444.7,607.8"/>
<polyline points="416.4,547.8 398.3,585.8"/>
<polyline points="444.7,607.8 440.0,622.0"/>
<polyline points="495.3,610.9 486.4,630.7"/>
<polyline points="460.3,681.4 483.3,665.7 494.0,652.0"/>
<polyline points="566.5,639.1 542.4,668.8 533.0,683.0"/>
<polyline points="514.3,739.0 535.2,712.8 546.0,696.0"/>
<polyline points="514.0,784.4 558.0,772.9 578.0,767.7"/>
<polyline points="634.5,643.2 641.7,684.9 643.0,689.0"/>
<polyline points="656.9,751.8 650.3,717.4 646.0,694.0"/>
<polyline points="700.6,746.7 683.9,707.9 672.0,686.0"/>
<polyline points="700.3,617.9 719.3,657.0 739.4,683.4 760.9,723.1"/>
<polyline points="817.0,672.0 815.5,644.7 815.0,617.0"/>
</g>
<g font-family="Liberation Sans" font-size="10" font-weight="bold" fill="#8a8a8a" text-anchor="middle" letter-spacing="0.3" stroke="#ffffff" stroke-width="2" paint-order="stroke" stroke-opacity="0.9" dominant-baseline="central">
<text transform="translate(299,280) rotate(62)">White Oak Dr</text>
<text transform="translate(304,418) rotate(-76)">White Oak Dr</text>
<text transform="translate(354,647) rotate(78)">White Oak Dr</text>
<text transform="translate(375,450.5)" font-size="11" fill="#8f8f8f">Kings Park</text>
<text transform="translate(421,358) rotate(-70)">Anne Rd</text>
<text transform="translate(527,281) rotate(-8)">Anne Rd</text>
<text transform="translate(834,266) rotate(8)">Anne</text>
<text transform="translate(479,402) rotate(11)">Elizabeth Ave</text>
<text transform="translate(830,439) rotate(5)">Elizabeth</text>
<text transform="translate(113,528) rotate(75)">S Julian St</text>
<text transform="translate(61.5,590) rotate(-13)">E Porter Ave</text>
<text transform="translate(437.5,626.5) rotate(33)">E Porter Ave</text>
<text transform="translate(763,655.5) rotate(-27)">E Porter Ave</text>
<text transform="translate(582,806) rotate(70)">Sylvan</text>
</g>

<g fill="none" stroke="#0f5ef2" stroke-width="3" stroke-linejoin="round">
<polyline points="7.0,186.0 29.0,186.0"/>
<polyline points="7.0,203.0 24.0,197.0 29.0,184.0"/>
<polyline points="29.0,184.0 74.0,390.0 99.0,488.6 113.4,553.8 115.9,586.0 164.0,790.0 170.0,814.0"/>
<polyline points="100.0,390.0 117.0,484.0 100.0,489.0"/>
<polyline points="281.2,281.4 306.0,334.5 305.0,344.0 299.3,390.0 295.7,404.0 295.7,510.0 295.0,521.0"/>
<polyline points="305.0,344.0 420.0,378.0 441.7,383.0 490.0,396.4 546.0,404.0 630.0,408.5 678.0,412.0 845.0,432.0"/>
<polyline points="406.0,360.0 420.0,327.0 426.0,313.0 433.0,302.0 442.0,294.0 454.0,286.0 468.0,281.0 541.0,270.5 630.0,257.2 664.0,252.4 700.0,250.3 740.0,249.4 775.0,250.0 800.0,252.5 822.0,256.5 845.0,262.3"/>
<polyline points="113.0,553.0 133.0,558.6 210.0,545.3 250.0,537.0 272.0,532.0 288.0,529.5 302.0,530.5 316.0,535.0 327.0,543.0 334.0,552.0 338.5,563.0 340.3,577.0 337.6,603.0 338.1,663.0 343.0,676.0 365.0,748.0 381.0,771.0 390.0,797.0 396.0,814.0"/>
<polyline points="340.3,577.0 357.2,575.0 384.0,590.0 400.0,600.5 483.3,644.0 561.7,708.0 583.4,705.5 610.0,700.7 663.2,690.6 789.7,624.5 804.0,618.8 845.0,616.0"/>
<polyline points="561.7,708.0 566.0,722.0 583.0,785.0 597.0,814.0"/>
<polyline points="400.7,200.5 402.0,183.0"/>
</g>
<use href="#T" transform="translate(59.1,196.4) rotate(90)"/>
<use href="#S" transform="translate(84.5,190.1) rotate(72)"/>
<use href="#T" transform="translate(33.3,202.9) rotate(90)"/>
<use href="#T" transform="translate(29.0,216.2) rotate(90)"/>
<use href="#S" transform="translate(3.6,222.0) rotate(72)"/>
<use href="#T" transform="translate(71.9,257.2) rotate(90)"/>
<use href="#S" transform="translate(95.3,252.4) rotate(288)"/>
<use href="#T" transform="translate(44.7,288.6) rotate(90)"/>
<use href="#S" transform="translate(14.5,295.9) rotate(288)"/>
<use href="#T" transform="translate(50.7,317.1) rotate(90)"/>
<use href="#S" transform="translate(22.9,323.6) rotate(72)"/>
<use href="#T" transform="translate(85.0,321.2) rotate(90)"/>
<use href="#S" transform="translate(119.5,314.0) rotate(216)"/>
<use href="#T" transform="translate(57.2,346.5) rotate(90)"/>
<use href="#S" transform="translate(27.8,352.6) rotate(144)"/>
<use href="#T" transform="translate(92.2,354.3) rotate(90)"/>
<use href="#S" transform="translate(127.9,351.4) rotate(288)"/>
<use href="#T" transform="translate(66.4,375.5) rotate(90)"/>
<use href="#E" transform="translate(60.8,379.9)"/>
<use href="#S" transform="translate(32.6,379.1) rotate(0)"/>
<use href="#T" transform="translate(100.2,388.5) rotate(90)"/>
<use href="#S" transform="translate(127.9,385.5) rotate(72)"/>
<use href="#T" transform="translate(401.0,195.0) rotate(90)"/>
<use href="#E" transform="translate(400.7,200.5)"/>
<use href="#S" transform="translate(258.3,287.4) rotate(0)"/>
<use href="#T" transform="translate(281.2,281.4) rotate(90)"/>
<use href="#S" transform="translate(360.9,300.2) rotate(72)"/>
<use href="#T" transform="translate(335.5,327.2) rotate(0)"/>
<use href="#S" transform="translate(263.1,353.8) rotate(216)"/>
<use href="#T" transform="translate(299.3,359.8) rotate(90)"/>
<use href="#T" transform="translate(389.8,367.1) rotate(90)"/>
<use href="#T" transform="translate(406.7,357.4) rotate(90)"/>
<use href="#S" transform="translate(414.0,284.3) rotate(0)"/>
<use href="#S" transform="translate(470.7,237.9) rotate(216)"/>
<use href="#T" transform="translate(481.5,274.1) rotate(0)"/>
<use href="#T" transform="translate(429.7,301.9) rotate(0)"/>
<use href="#S" transform="translate(543.1,234.3) rotate(288)"/>
<use href="#T" transform="translate(545.5,263.3) rotate(0)"/>
<use href="#E" transform="translate(554.0,266.9)"/>
<use href="#T" transform="translate(505.7,298.3) rotate(0)"/>
<use href="#S" transform="translate(504.5,327.2) rotate(216)"/>
<use href="#T" transform="translate(568.4,289.8) rotate(0)"/>
<use href="#S" transform="translate(566.0,318.8) rotate(216)"/>
<use href="#S" transform="translate(602.2,225.9) rotate(216)"/>
<use href="#T" transform="translate(605.9,253.6) rotate(0)"/>
<use href="#T" transform="translate(632.8,279.4) rotate(0)"/>
<use href="#S" transform="translate(638.5,320.5) rotate(72)"/>
<use href="#E" transform="translate(441.7,382.5)"/>
<use href="#S" transform="translate(492.4,361.0) rotate(288)"/>
<use href="#T" transform="translate(484.5,388.8) rotate(0)"/>
<use href="#S" transform="translate(547.9,370.7) rotate(144)"/>
<use href="#S" transform="translate(616.7,377.9) rotate(0)"/>
<use href="#S" transform="translate(661.8,216.3) rotate(72)"/>
<use href="#T" transform="translate(666.3,245.9) rotate(0)"/>
<use href="#S" transform="translate(714.6,208.4) rotate(144)"/>
<use href="#T" transform="translate(713.8,241.0) rotate(0)"/>
<use href="#E" transform="translate(722.3,246.7)"/>
<use href="#S" transform="translate(769.1,209.8) rotate(216)"/>
<use href="#T" transform="translate(767.1,243.0) rotate(0)"/>
<use href="#S" transform="translate(818.8,216.3) rotate(0)"/>
<use href="#T" transform="translate(811.7,248.7) rotate(0)"/>
<use href="#T" transform="translate(698.7,270.9) rotate(0)"/>
<use href="#S" transform="translate(691.9,311.2) rotate(72)"/>
<use href="#T" transform="translate(757.2,271.4) rotate(0)"/>
<use href="#S" transform="translate(753.5,304.9) rotate(288)"/>
<use href="#T" transform="translate(816.8,278.8) rotate(0)"/>
<use href="#S" transform="translate(809.4,323.4) rotate(72)"/>
<use href="#S" transform="translate(674.9,381.8) rotate(288)"/>
<use href="#T" transform="translate(671.2,405.7) rotate(0)"/>
<use href="#E" transform="translate(678.3,411.3)"/>
<use href="#S" transform="translate(725.1,380.0) rotate(0)"/>
<use href="#T" transform="translate(721.4,410.6) rotate(0)"/>
<use href="#S" transform="translate(794.1,388.6) rotate(288)"/>
<use href="#T" transform="translate(790.4,418.9) rotate(0)"/>
<use href="#S" transform="translate(845.0,401.4) rotate(288)"/>
<use href="#T" transform="translate(844.5,423.7) rotate(0)"/>
<use href="#T" transform="translate(68.8,402.9) rotate(90)"/>
<use href="#S" transform="translate(43.4,407.8) rotate(144)"/>
<use href="#E" transform="translate(100.2,405.3)"/>
<use href="#T" transform="translate(73.6,425.9) rotate(90)"/>
<use href="#S" transform="translate(47.1,434.3) rotate(144)"/>
<use href="#T" transform="translate(109.1,434.3) rotate(90)"/>
<use href="#S" transform="translate(136.4,427.1) rotate(72)"/>
<use href="#T" transform="translate(80.1,455.3) rotate(90)"/>
<use href="#S" transform="translate(48.3,462.1) rotate(288)"/>
<use href="#T" transform="translate(114.7,459.2) rotate(90)"/>
<use href="#S" transform="translate(142.4,453.6) rotate(144)"/>
<use href="#T" transform="translate(85.7,480.2) rotate(90)"/>
<use href="#S" transform="translate(60.3,486.2) rotate(0)"/>
<use href="#T" transform="translate(100.2,488.6) rotate(90)"/>
<use href="#S" transform="translate(72.4,522.4) rotate(288)"/>
<use href="#T" transform="translate(87.4,520.0) rotate(90)"/>
<use href="#T" transform="translate(132.8,558.6) rotate(90)"/>
<use href="#T" transform="translate(117.8,599.3) rotate(90)"/>
<use href="#E" transform="translate(114.7,587.0)"/>
<use href="#S" transform="translate(194.3,505.5) rotate(72)"/>
<use href="#T" transform="translate(199.1,526.8) rotate(0)"/>
<use href="#T" transform="translate(193.1,563.4) rotate(0)"/>
<use href="#S" transform="translate(200.6,583.8) rotate(0)"/>
<use href="#S" transform="translate(257.1,401.7) rotate(288)"/>
<use href="#T" transform="translate(287.2,396.9) rotate(90)"/>
<use href="#E" transform="translate(293.3,396.9)"/>
<use href="#S" transform="translate(253.9,454.3) rotate(0)"/>
<use href="#T" transform="translate(280.0,454.3) rotate(90)"/>
<use href="#T" transform="translate(295.0,521.2) rotate(90)"/>
<use href="#T" transform="translate(273.2,539.3) rotate(0)"/>
<use href="#S" transform="translate(286.8,565.9) rotate(0)"/>
<use href="#T" transform="translate(340.3,576.7) rotate(90)"/>
<use href="#T" transform="translate(337.6,602.9) rotate(90)"/>
<use href="#E" transform="translate(335.3,590.0)"/>
<use href="#T" transform="translate(357.2,575.0) rotate(90)"/>
<use href="#S" transform="translate(416.4,547.8) rotate(216)"/>
<use href="#T" transform="translate(398.3,585.8) rotate(0)"/>
<use href="#T" transform="translate(462.2,418.1) rotate(0)"/>
<use href="#S" transform="translate(453.8,451.9) rotate(144)"/>
<use href="#T" transform="translate(546.3,398.2) rotate(0)"/>
<use href="#T" transform="translate(551.5,431.2) rotate(0)"/>
<use href="#S" transform="translate(549.6,459.2) rotate(288)"/>
<use href="#T" transform="translate(615.5,402.9) rotate(0)"/>
<use href="#T" transform="translate(603.9,435.0) rotate(0)"/>
<use href="#S" transform="translate(602.7,462.1) rotate(0)"/>
<use href="#S" transform="translate(461.5,570.2) rotate(72)"/>
<use href="#T" transform="translate(663.5,439.6) rotate(0)"/>
<use href="#S" transform="translate(660.7,475.1) rotate(0)"/>
<use href="#T" transform="translate(721.4,445.3) rotate(0)"/>
<use href="#S" transform="translate(718.6,477.1) rotate(72)"/>
<use href="#T" transform="translate(774.8,450.4) rotate(0)"/>
<use href="#S" transform="translate(771.1,483.6) rotate(216)"/>
<use href="#T" transform="translate(838.7,458.1) rotate(0)"/>
<use href="#S" transform="translate(835.0,492.2) rotate(72)"/>
<use href="#S" transform="translate(781.9,551.8) rotate(216)"/>
<use href="#T" transform="translate(794.1,615.5) rotate(0)"/>
<use href="#S" transform="translate(724.8,580.0) rotate(216)"/>
<use href="#S" transform="translate(700.3,617.9) rotate(0)"/>
<use href="#S" transform="translate(840.1,575.3) rotate(72)"/>
<use href="#T" transform="translate(841.5,609.0) rotate(0)"/>
<use href="#S" transform="translate(73.6,609.0) rotate(144)"/>
<use href="#T" transform="translate(123.1,625.4) rotate(90)"/>
<use href="#S" transform="translate(91.2,633.6) rotate(288)"/>
<use href="#T" transform="translate(127.9,651.2) rotate(90)"/>
<use href="#S" transform="translate(95.3,658.4) rotate(144)"/>
<use href="#T" transform="translate(159.3,639.1) rotate(90)"/>
<use href="#S" transform="translate(205.0,628.3) rotate(288)"/>
<use href="#T" transform="translate(134.7,681.4) rotate(90)"/>
<use href="#S" transform="translate(96.5,689.8) rotate(288)"/>
<use href="#T" transform="translate(167.8,681.4) rotate(90)"/>
<use href="#S" transform="translate(201.3,677.2) rotate(0)"/>
<use href="#T" transform="translate(142.4,712.3) rotate(90)"/>
<use href="#S" transform="translate(107.4,720.0) rotate(72)"/>
<use href="#T" transform="translate(176.2,714.0) rotate(90)"/>
<use href="#S" transform="translate(208.0,710.3) rotate(72)"/>
<use href="#S" transform="translate(18.1,716.4) rotate(0)"/>
<use href="#T" transform="translate(152.1,761.3) rotate(90)"/>
<use href="#S" transform="translate(114.7,768.3) rotate(144)"/>
<use href="#T" transform="translate(189.7,776.5) rotate(90)"/>
<use href="#S" transform="translate(219.2,772.0) rotate(0)"/>
<use href="#S" transform="translate(18.5,759.1) rotate(72)"/>
<use href="#S" transform="translate(20.5,786.7) rotate(216)"/>
<use href="#S" transform="translate(4.8,691.0) rotate(72)"/>
<use href="#S" transform="translate(289.8,601.7) rotate(216)"/>
<use href="#T" transform="translate(338.1,666.9) rotate(90)"/>
<use href="#S" transform="translate(302.6,667.4) rotate(0)"/>
<use href="#T" transform="translate(347.7,700.7) rotate(90)"/>
<use href="#S" transform="translate(311.0,716.4) rotate(72)"/>
<use href="#T" transform="translate(375.0,755.0) rotate(90)"/>
<use href="#E" transform="translate(364.0,748.5)"/>
<use href="#S" transform="translate(337.8,768.3) rotate(288)"/>
<use href="#T" transform="translate(411.0,764.4) rotate(90)"/>
<use href="#S" transform="translate(430.5,756.8) rotate(216)"/>
<use href="#T" transform="translate(404.4,626.6) rotate(0)"/>
<use href="#S" transform="translate(390.7,648.8) rotate(72)"/>
<use href="#T" transform="translate(389.7,797.8) rotate(90)"/>
<use href="#S" transform="translate(352.7,806.7) rotate(288)"/>
<use href="#T" transform="translate(423.0,797.0) rotate(90)"/>
<use href="#S" transform="translate(450.3,791.8) rotate(144)"/>
<use href="#T" transform="translate(444.7,607.8) rotate(0)"/>
<use href="#S" transform="translate(495.3,610.9) rotate(288)"/>
<use href="#T" transform="translate(486.4,630.7) rotate(0)"/>
<use href="#T" transform="translate(483.3,665.7) rotate(90)"/>
<use href="#S" transform="translate(460.3,681.4) rotate(72)"/>
<use href="#S" transform="translate(566.5,639.1) rotate(144)"/>
<use href="#T" transform="translate(542.4,668.8) rotate(0)"/>
<use href="#T" transform="translate(535.2,712.8) rotate(0)"/>
<use href="#S" transform="translate(514.3,739.0) rotate(144)"/>
<use href="#T" transform="translate(581.0,698.3) rotate(90)"/>
<use href="#E" transform="translate(579.8,687.4)"/>
<use href="#T" transform="translate(573.3,707.9) rotate(90)"/>
<use href="#T" transform="translate(569.1,731.7) rotate(90)"/>
<use href="#S" transform="translate(601.6,774.2) rotate(216)"/>
<use href="#T" transform="translate(592.5,777.2) rotate(90)"/>
<use href="#T" transform="translate(558.0,772.9) rotate(90)"/>
<use href="#S" transform="translate(514.0,784.4) rotate(72)"/>
<use href="#S" transform="translate(634.5,643.2) rotate(72)"/>
<use href="#T" transform="translate(641.7,684.9) rotate(0)"/>
<use href="#T" transform="translate(650.3,717.4) rotate(0)"/>
<use href="#S" transform="translate(656.9,751.8) rotate(216)"/>
<use href="#T" transform="translate(683.9,707.9) rotate(0)"/>
<use href="#S" transform="translate(700.6,746.7) rotate(288)"/>
<use href="#T" transform="translate(719.3,657.0) rotate(0)"/>
<use href="#E" transform="translate(730.7,651.3)"/>
<use href="#T" transform="translate(739.4,683.4) rotate(0)"/>
<use href="#S" transform="translate(760.9,723.1) rotate(0)"/>
<use href="#T" transform="translate(752.3,634.6) rotate(0)"/>
<use href="#T" transform="translate(815.5,644.7) rotate(0)"/>
<use href="#S" transform="translate(817.0,672.0) rotate(0)"/>
<use href="#S" transform="translate(840.0,729.4) rotate(216)"/>
<use href="#S" transform="translate(735.0,807.0) rotate(72)"/>
<use href="#S" transform="translate(24.0,812.0) rotate(288)"/>
<use href="#E" transform="translate(169.3,812.0)"/>
<use href="#S" transform="translate(200.0,812.8) rotate(216)"/>
<use href="#S" transform="translate(231.0,811.5) rotate(72)"/>
</g>
</svg>

<!-- map overlay icon -->
<svg class="a" style="left:815px;top:787px" width="24" height="20"><path d="M2,3h7l2,2h11v13h-20z" fill="#3a3a3a"/><path d="M5,9h14M5,12h14M5,15h14" stroke="#eee" stroke-width="1.4"/></svg>

<!-- status bar -->
<div class="a" style="left:6px;top:814px;width:840px;height:25px;background:#323232;border:1px solid #4d4d4d;border-top:none"></div>
<div class="a" style="left:12px;top:815px;width:100px;height:22px;background:#1f1f1f;border:1px solid #6a6a6a"></div>
<svg class="a" style="left:0;top:814px" width="877" height="25">
 <path d="M101,10h6l-3,3z" fill="#ccc"/>
 <path d="M116.5,4v16M242.5,4v16M619.5,4v16M757.5,4v16M788.5,4v16M817.5,4v16" stroke="#888" stroke-width="1"/>
 <path d="M123,4h6v6h-6zM130,4h6v6h-6zM123,11h6v6h-6z" fill="none" stroke="#999"/><path d="M134,12v8M130,16h8" stroke="#3d9be0" stroke-width="1.8"/>
 <path d="M143.5,4.5h13v13h-13zM143.5,9h13M143.5,13h13M148,4.5v13M152,4.5v13" fill="none" stroke="#999"/>
 <path d="M163,18l12,-10M163,5h5v3h-5zM171,14h5v3h-5z" fill="none" stroke="#3d9be0" stroke-width="1.2"/><path d="M163,19h14" stroke="#3d9be0" stroke-width="1.5"/><rect x="162" y="17" width="3" height="3" fill="#3aa045"/><path d="M174,6h5M176.5,3.5v5" stroke="#ccc"/>
 <rect x="183" y="4" width="9" height="9" fill="#2a6a30"/><path d="M183,13h16M192,4v16" stroke="#888" stroke-dasharray="1.5 1.5"/><circle cx="192" cy="13" r="2" fill="#888"/>
 <text x="203" y="16" font-size="11" font-weight="bold" fill="#3d9be0" font-family="Liberation Sans">N</text><path d="M212,3v16l6,-6" fill="none" stroke="#aaa"/><path d="M214,5l3,3l3,-3" fill="none" stroke="#3d9be0" stroke-width="1.3"/>
 <path d="M226,9l3.5,3.5l3.5,-3.5" fill="none" stroke="#ddd" stroke-width="1.3"/>
 <path d="M508,9l3.5,3.5l3.5,-3.5" fill="none" stroke="#ddd" stroke-width="1.3"/>
 <rect x="624" y="1" width="130" height="22" fill="#383838"/>
 <circle cx="631" cy="15" r="3.5" fill="none" stroke="#3d9be0" stroke-width="1.2"/><path d="M634,18l3,3" stroke="#e07a30"/><rect x="633" y="5" width="9" height="9" fill="#3d7a9a"/>
 <rect x="767" y="6" width="12" height="12" fill="#4a4a4a"/><path d="M770,8l3,4l3,-3M773,12v5" fill="none" stroke="#2a2a2a" stroke-width="1"/>
 <path d="M798.5,5v14M806.5,5v14" stroke="#a8a8a8" stroke-width="3.6"/>
 <path d="M826,10 a7,7 0 0 1 12,-2M838,4v5h-5M840,14 a7,7 0 0 1 -12,2M826,20v-5h5" fill="none" stroke="#2a9ae8" stroke-width="2.2"/>
</svg>

<!-- bottom pane -->
<div class="a" style="left:6px;top:864px;width:77px;height:6px;background:#56565c"></div>

<!-- right dock tabs -->
<div class="rt" style="top:159px;height:40px"><div class="bar"></div></div>
<div class="rt" style="top:211px;height:157px"><div class="bar"></div></div>
<div class="rt" style="top:378px;height:51px"><div class="bar"></div></div>
<div class="rt" style="top:438px;height:60px"><div class="bar"></div></div>
<div class="rt" style="top:511px;height:78px"><div class="bar"></div></div>
<div class="rt" style="top:602px;height:38px"><div class="bar"></div></div>
<div class="rt" style="top:653px;height:40px"><div class="bar"></div></div>
<div class="rt" style="top:703px;height:81px"><div class="bar"></div></div>
<div class="t" style="left:295.4px;top:10.80px;font-size:12.29px;line-height:12.29px;color:#cacaca;transform:scaleX(0.959);transform-origin:0 0">Connectivity Errors</div>
<div class="t" style="left:472.3px;top:10.66px;font-size:12.57px;line-height:12.57px;color:#e2e2e2;transform:scaleX(0.912);transform-origin:0 0">Joseph - Penn State University</div>
<div class="t" style="left:718.5px;top:10.27px;font-size:13.27px;line-height:13.27px;color:#8e8e8e;transform:scaleX(1.016);transform-origin:0 0">?</div>
<div class="t" style="left:18.0px;top:39.08px;font-size:12.43px;line-height:12.43px;color:#e6e6e6;transform:scaleX(1.034);transform-origin:0 0">Project</div>
<div class="t" style="left:83.3px;top:38.96px;font-size:12.57px;line-height:12.57px;color:#ffffff;transform:scaleX(1.072);transform-origin:0 0">Map</div>
<div class="t" style="left:123.0px;top:39.08px;font-size:12.43px;line-height:12.43px;color:#e6e6e6;transform:scaleX(1.062);transform-origin:0 0">Insert</div>
<div class="t" style="left:168.0px;top:39.08px;font-size:12.43px;line-height:12.43px;color:#e6e6e6;transform:scaleX(0.994);transform-origin:0 0">Analysis</div>
<div class="t" style="left:227.0px;top:39.08px;font-size:12.43px;line-height:12.43px;color:#e6e6e6;transform:scaleX(1.011);transform-origin:0 0">View</div>
<div class="t" style="left:266.0px;top:39.08px;font-size:12.43px;line-height:12.43px;color:#e6e6e6;transform:scaleX(1.027);transform-origin:0 0">Edit</div>
<div class="t" style="left:300.8px;top:39.08px;font-size:12.43px;line-height:12.43px;color:#e6e6e6;transform:scaleX(1.051);transform-origin:0 0">Imagery</div>
<div class="t" style="left:361.5px;top:39.08px;font-size:12.43px;line-height:12.43px;color:#e6e6e6;transform:scaleX(0.965);transform-origin:0 0">Share</div>
<div class="t" style="left:406.3px;top:39.08px;font-size:12.43px;line-height:12.43px;color:#e6e6e6;transform:scaleX(1.025);transform-origin:0 0">Help</div>
<div class="t" style="left:476.4px;top:40.36px;font-size:12.57px;line-height:12.57px;color:#e6e6e6;transform:scaleX(1.019);transform-origin:0 0">Group Layer</div>
<div class="t" style="left:601.0px;top:40.36px;font-size:12.57px;line-height:12.57px;color:#e6e6e6;transform:scaleX(1.014);transform-origin:0 0">Linear Referencing</div>
<div class="t" style="left:765.2px;top:40.36px;font-size:12.57px;line-height:12.57px;color:#e6e6e6;transform:scaleX(1.058);transform-origin:0 0">Utility Network</div>
<div class="t" style="left:12.3px;top:99.06px;font-size:12.57px;line-height:12.57px;color:#8c8c8c;transform:scaleX(0.868);transform-origin:0 0">Paste</div>
<div class="t" style="left:86.4px;top:99.06px;font-size:12.57px;line-height:12.57px;color:#eeeeee;transform:scaleX(0.901);transform-origin:0 0">Explore</div>
<div class="t" style="left:176.0px;top:99.06px;font-size:12.57px;line-height:12.57px;color:#eeeeee;transform:scaleX(0.939);transform-origin:0 0">Bookmarks</div>
<div class="t" style="left:250.3px;top:99.06px;font-size:12.57px;line-height:12.57px;color:#eeeeee;transform:scaleX(0.865);transform-origin:0 0">Go</div>
<div class="t" style="left:243.5px;top:111.86px;font-size:12.57px;line-height:12.57px;color:#eeeeee;transform:scaleX(0.841);transform-origin:0 0">To XY</div>
<div class="t" style="left:369.0px;top:99.06px;font-size:12.57px;line-height:12.57px;color:#eeeeee;transform:scaleX(0.879);transform-origin:0 0">Select</div>
<div class="t" style="left:407.7px;top:99.06px;font-size:12.57px;line-height:12.57px;color:#eeeeee;transform:scaleX(0.885);transform-origin:0 0">Select By</div>
<div class="t" style="left:406.5px;top:111.86px;font-size:12.57px;line-height:12.57px;color:#eeeeee;transform:scaleX(0.966);transform-origin:0 0">Attributes</div>
<div class="t" style="left:465.5px;top:99.06px;font-size:12.57px;line-height:12.57px;color:#eeeeee;transform:scaleX(0.876);transform-origin:0 0">Select By</div>
<div class="t" style="left:465.5px;top:111.86px;font-size:12.57px;line-height:12.57px;color:#eeeeee;transform:scaleX(0.953);transform-origin:0 0">Location</div>
<div class="t" style="left:553.3px;top:99.06px;font-size:12.57px;line-height:12.57px;color:#eeeeee;transform:scaleX(0.970);transform-origin:0 0">Inquiry</div>
<div class="t" style="left:606.0px;top:99.06px;font-size:12.57px;line-height:12.57px;color:#eeeeee;transform:scaleX(0.943);transform-origin:0 0">Labeling</div>
<div class="t" style="left:666.0px;top:99.06px;font-size:12.57px;line-height:12.57px;color:#eeeeee;transform:scaleX(0.997);transform-origin:0 0">Offline</div>
<div class="t" style="left:11.4px;top:138.54px;font-size:11.17px;line-height:11.17px;color:#bdbdbd;transform:scaleX(1.050);transform-origin:0 0">Clipboard</div>
<div class="t" style="left:149.4px;top:138.54px;font-size:11.17px;line-height:11.17px;color:#bdbdbd;transform:scaleX(1.009);transform-origin:0 0">Navigate</div>
<div class="t" style="left:307.4px;top:138.54px;font-size:11.17px;line-height:11.17px;color:#bdbdbd;transform:scaleX(0.916);transform-origin:0 0">Layer</div>
<div class="t" style="left:420.5px;top:138.54px;font-size:11.17px;line-height:11.17px;color:#bdbdbd;transform:scaleX(1.005);transform-origin:0 0">Selection</div>
<div class="t" style="left:33.5px;top:165.50px;font-size:12.29px;line-height:12.29px;color:#f4f4f4;transform:scaleX(0.957);transform-origin:0 0">Connectivity Errors</div>
<div class="t" style="left:18.5px;top:821.28px;font-size:12.43px;line-height:12.43px;color:#e6e6e6;transform:scaleX(0.856);transform-origin:0 0">1:2,214</div>
<div class="t" style="left:336.8px;top:821.48px;font-size:12.43px;line-height:12.43px;color:#e6e6e6;transform:scaleX(0.870);transform-origin:0 0">1,039,414.51E 1,858,691.36N ftUS</div>
<div class="t" style="left:647.4px;top:820.98px;font-size:12.43px;line-height:12.43px;color:#a0a0a0;transform:scaleX(0.895);transform-origin:0 0">Selected Features: 0</div>
<div class="t" style="left:6.6px;top:849.20px;font-size:12.29px;line-height:12.29px;color:#dedede;transform:scaleX(0.938);transform-origin:0 0">Error Inspector</div>
<div class="t" style="left:867.77px;top:159.5px;font-size:13.2px;line-height:13.2px;color:#d4d4d4;transform-origin:0 0;transform:rotate(90deg) scaleX(0.857)">Catalog</div>
<div class="t" style="left:867.77px;top:211.0px;font-size:13.2px;line-height:13.2px;color:#d4d4d4;transform-origin:0 0;transform:rotate(90deg) scaleX(0.922)">Modify Terminal Connections</div>
<div class="t" style="left:867.77px;top:378.0px;font-size:13.2px;line-height:13.2px;color:#d4d4d4;transform-origin:0 0;transform:rotate(90deg) scaleX(0.946)">Contents</div>
<div class="t" style="left:867.77px;top:438.0px;font-size:13.2px;line-height:13.2px;color:#d4d4d4;transform-origin:0 0;transform:rotate(90deg) scaleX(0.904)">Symbology</div>
<div class="t" style="left:867.77px;top:511.0px;font-size:13.2px;line-height:13.2px;color:#d4d4d4;transform-origin:0 0;transform:rotate(90deg) scaleX(0.867)">Geoprocessing</div>
<div class="t" style="left:867.77px;top:602.0px;font-size:13.2px;line-height:13.2px;color:#d4d4d4;transform-origin:0 0;transform:rotate(90deg) scaleX(0.901)">History</div>
<div class="t" style="left:867.77px;top:653.0px;font-size:13.2px;line-height:13.2px;color:#d4d4d4;transform-origin:0 0;transform:rotate(90deg) scaleX(0.916)">Pop-up</div>
<div class="t" style="left:867.77px;top:703.5px;font-size:13.2px;line-height:13.2px;color:#d4d4d4;transform-origin:0 0;transform:rotate(90deg) scaleX(0.839)">Create Features</div>
</body></html>
